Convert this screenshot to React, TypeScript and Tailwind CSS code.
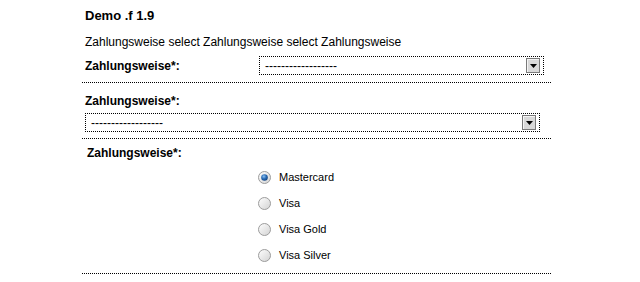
import React from "react";

function Select({ width }: { width: string }) {
  return (
    <div
      className={`flex h-[19px] items-center justify-between border border-dotted border-black bg-white pl-[5px] pr-[3px] ${width}`}
    >
      <span className="text-[12px] leading-none text-black">------------------</span>
      <div className="flex h-[15px] w-[14px] items-center justify-center border border-[#7a7a7a] bg-[#d9d9d9] shadow-[inset_1px_1px_0_#f4f4f4]">
        <svg width="7" height="4" viewBox="0 0 7 4">
          <path d="M0 0h7L3.5 4z" fill="#000" />
        </svg>
      </div>
    </div>
  );
}

function Radio({ checked }: { checked?: boolean }) {
  return (
    <svg width="13" height="13" viewBox="0 0 13 13">
      <defs>
        <linearGradient id="rbg" x1="0" y1="0" x2="1" y2="1">
          <stop offset="0" stopColor="#ffffff" />
          <stop offset="1" stopColor="#d2d2d2" />
        </linearGradient>
        <radialGradient id="rdot" cx="0.4" cy="0.35" r="0.7">
          <stop offset="0" stopColor="#8fc2f0" />
          <stop offset="0.5" stopColor="#2a6db8" />
          <stop offset="1" stopColor="#123f7a" />
        </radialGradient>
      </defs>
      <circle cx="6.5" cy="6.5" r="6" fill="url(#rbg)" stroke="#9c9c9c" strokeWidth="1" />
      {checked && <circle cx="6.5" cy="6.5" r="3.3" fill="url(#rdot)" />}
    </svg>
  );
}

export default function App() {
  const opts = ["Mastercard", "Visa", "Visa Gold", "Visa Silver"];
  return (
    <div
      className="min-h-[282px] w-[640px] bg-white pl-[82px] pt-[8px] text-black"
      style={{ fontFamily: '"Liberation Sans", Arial, sans-serif' }}
    >
      <div className="w-[469px]">
        <h2 className="pl-[3px] text-[13px] font-bold leading-[15px]">Demo .f 1.9</h2>
        <p className="mt-[12px] pl-[3px] text-[12px] leading-[14px]">
          Zahlungsweise select Zahlungsweise select Zahlungsweise
        </p>

        <div className="flex items-center border-b border-dotted border-black pb-[7px] pt-[7px]">
          <div className="w-[177px] pl-[3px] text-[12px] font-bold leading-[14px]">Zahlungsweise*:</div>
          <Select width="w-[285px]" />
        </div>

        <div className="border-b border-dotted border-black pb-[6px] pt-[11px]">
          <div className="pl-[3px] text-[12px] font-bold leading-[14px]">Zahlungsweise*:</div>
          <div className="mt-[5px] pl-[3px]">
            <Select width="w-[455px]" />
          </div>
        </div>

        <div className="border-b border-dotted border-black pb-[5px] pt-[7px]">
          <div className="pl-[5px] text-[12px] font-bold leading-[14px]">Zahlungsweise*:</div>
          <div className="mt-[4px] flex flex-col pl-[176px]">
            {opts.map((o, i) => (
              <label key={o} className="flex h-[26px] items-center gap-[8px]">
                <Radio checked={i === 0} />
                <span className="text-[11px] leading-[13px]">{o}</span>
              </label>
            ))}
          </div>
        </div>
      </div>
    </div>
  );
}
